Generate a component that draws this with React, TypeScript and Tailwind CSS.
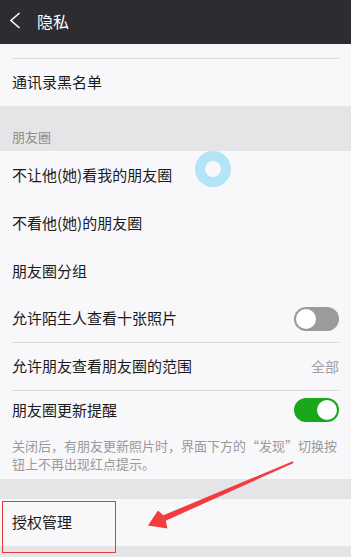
import React from "react";

const Row = ({ children, h = "h-[48px]" }: { children: React.ReactNode; h?: string }) => (
  <div className={`${h} flex items-center justify-between px-3 text-[15px] text-[#1b1b1b]`}>{children}</div>
);

const Divider = () => <div className="mx-3 h-px bg-[#dcdbde]" />;

const Toggle = ({ on }: { on: boolean }) => (
  <div
    className={`w-[45px] h-[24px] rounded-full flex items-center px-[2px] ${
      on ? "bg-[#18a81a] justify-end" : "bg-[#9b9b9b] justify-start"
    }`}
  >
    <div className="w-[20px] h-[20px] rounded-full bg-white" />
  </div>
);

export default function App() {
  return (
    <div
      className="relative w-[351px] h-[557px] overflow-hidden bg-[#e5e4e6]"
      style={{ fontFamily: '"Noto Sans CJK SC", "Noto Sans", sans-serif' }}
    >
      <div className="h-[44px] bg-[#2d2c30] flex items-center">
        <svg width="30" height="44" viewBox="0 0 30 44" className="shrink-0">
          <polyline points="19.5,13 11,20.5 19.5,28" fill="none" stroke="#ffffff" strokeWidth="1.6" />
        </svg>
        <span className="ml-[7px] text-[16px] text-white leading-none -mt-[2px]">隐私</span>
      </div>

      <div className="bg-[#f8f7fa]">
        <div className="h-[14px]" />
        <Divider />
        <Row h="h-[47px]">通讯录黑名单</Row>
      </div>

      <div className="h-[45px] pt-[22px] px-3 text-[13px] leading-[18px] text-[#8e8e8e]">朋友圈</div>

      <div className="bg-[#f8f7fa]">
        <Row>不让他(她)看我的朋友圈</Row>
        <Row>不看他(她)的朋友圈</Row>
        <Row>朋友圈分组</Row>
        <Row h="h-[47px]">
          <span>允许陌生人查看十张照片</span>
          <Toggle on={false} />
        </Row>
        <Divider />
        <Row h="h-[47px]">
          <span>允许朋友查看朋友圈的范围</span>
          <span className="text-[14px] text-[#a3a3a3]">全部</span>
        </Row>
        <Divider />
        <Row h="h-[38px]">
          <span>朋友圈更新提醒</span>
          <Toggle on={true} />
        </Row>
        <div className="h-[50px] pt-[8px] px-3 text-[13px] leading-[18px] text-[#9a9a9a]">
          关闭后，有朋友更新照片时，界面下方的“发现”切换按钮上不再出现红点提示。
        </div>
      </div>

      <div className="h-[20px]" />

      <div className="bg-[#f8f7fa]">
        <Row h="h-[47px]">授权管理</Row>
      </div>

      {/* touch indicator */}
      <div className="absolute left-[195px] top-[151px] w-[36px] h-[36px] rounded-full border-[10px] border-[#b1e5f7]" />

      {/* red annotation box */}
      <div className="absolute left-[2px] top-[501px] w-[114px] h-[52px] border border-[#e8383a]" />

      {/* red arrow */}
      <svg className="absolute left-0 top-0" width="351" height="557" viewBox="0 0 351 557">
        <polygon
          points="148,525.5 158,510.5 163.3,515.3 292.7,461.3 293.6,463 165.7,520.7 167.5,528.5"
          fill="#f23c3e"
        />
      </svg>
    </div>
  );
}
